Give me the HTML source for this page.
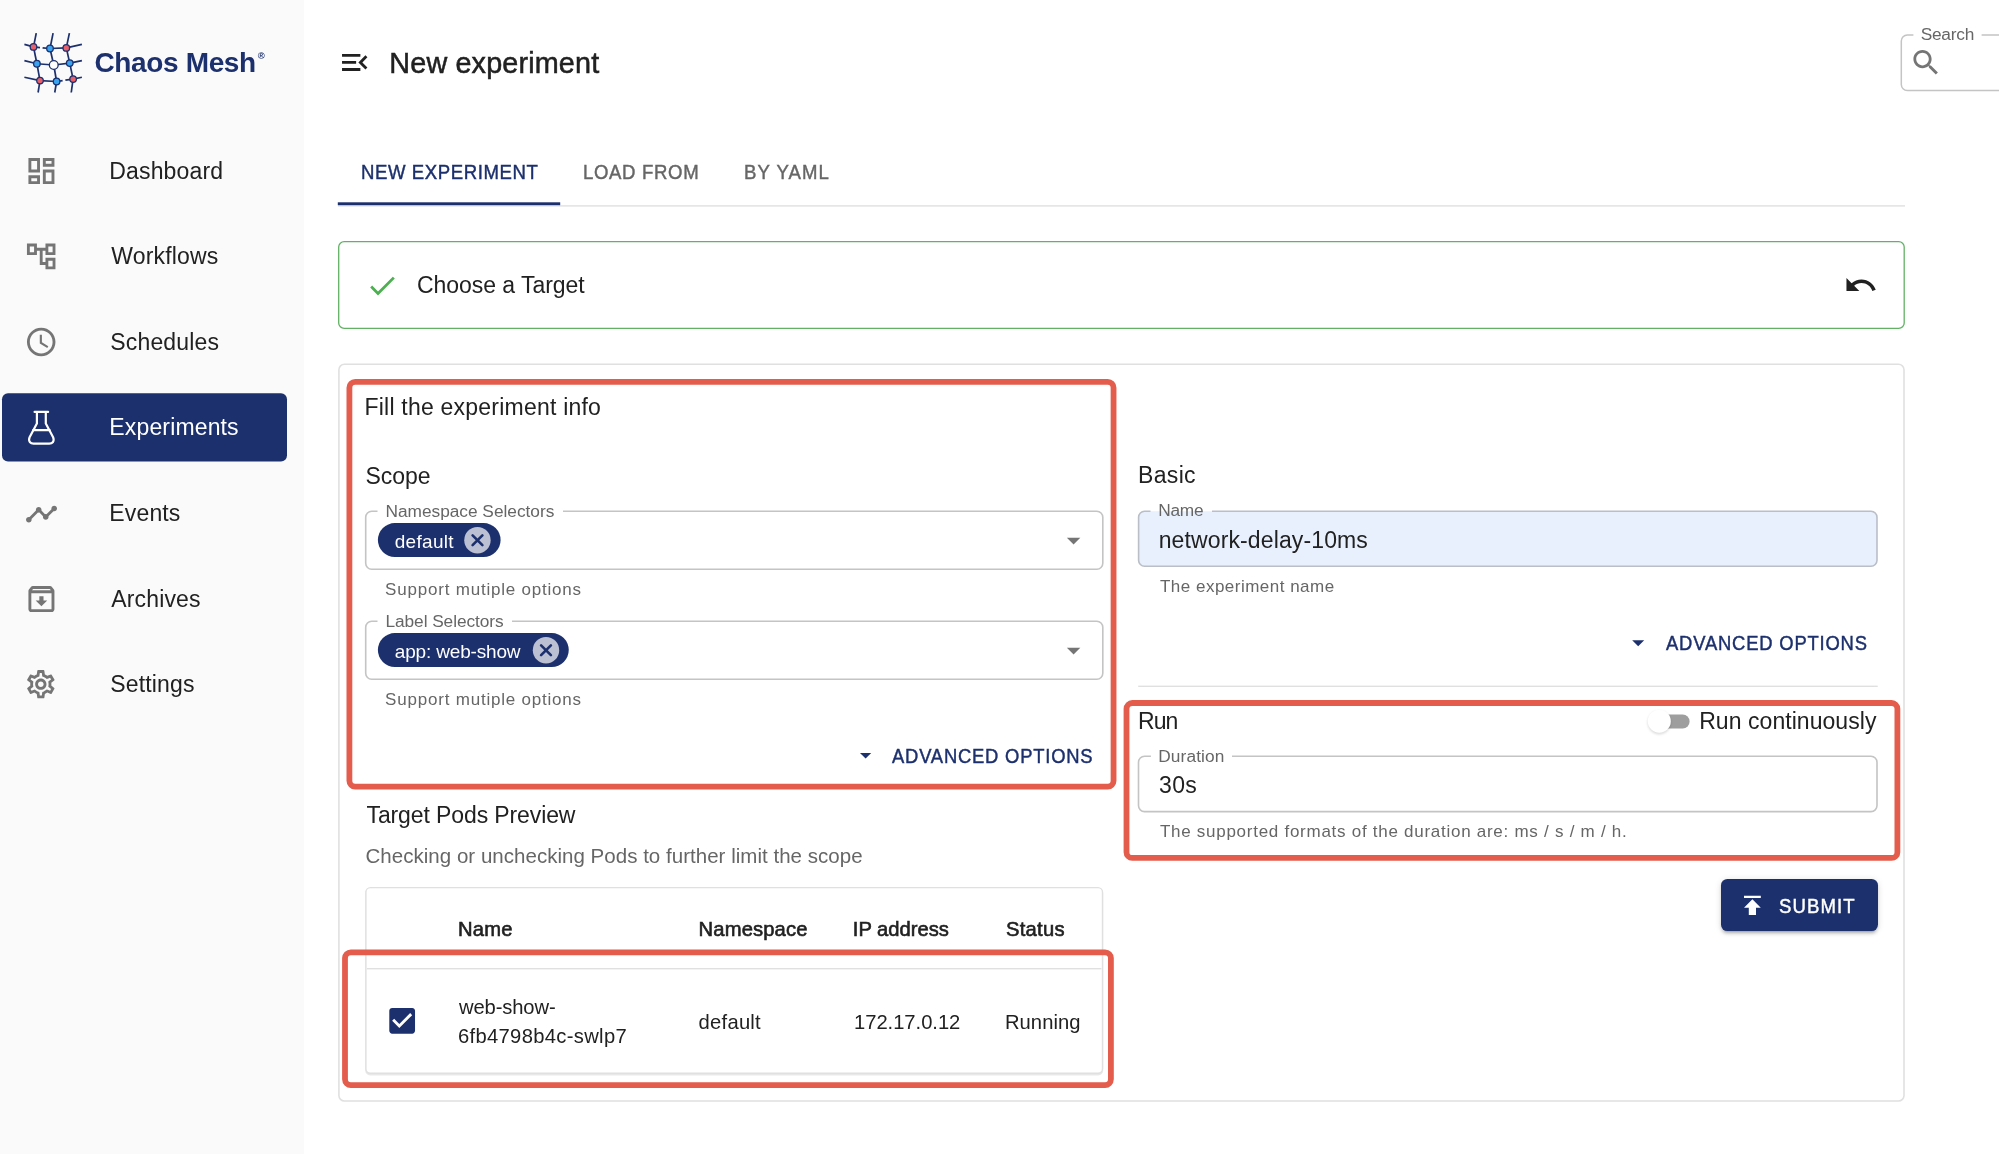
<!DOCTYPE html>
<html><head><meta charset="utf-8"><title>Chaos Mesh - New experiment</title>
<style>
html,body{margin:0;padding:0;}
body{width:1999px;height:1154px;position:relative;overflow:hidden;background:#ffffff;font-family:"Liberation Sans",sans-serif;}
.sb{position:absolute;left:0;top:0;width:304px;height:1154px;background:#fafafa;}
.btn{position:absolute;left:1721px;top:879.4px;width:156.7px;height:51.4px;border-radius:6.4px;background:#1c306d;box-shadow:0 4px 2px -3px rgba(0,0,0,0.2),0 3px 3px 0 rgba(0,0,0,0.14),0 1px 7px 0 rgba(0,0,0,0.12);}
.t{position:absolute;line-height:1;white-space:nowrap;}
.tx{position:absolute;left:0;top:0;width:1999px;height:1154px;will-change:transform;}
svg{position:absolute;left:0;top:0;}
</style></head><body>
<div class="sb"></div>
<div class="btn"></div>
<svg width="1999" height="1154" viewBox="0 0 1999 1154">
<defs><filter id='blur1' x='-50%' y='-50%' width='200%' height='200%'><feGaussianBlur stdDeviation='1.1'/></filter></defs>
<rect x='2' y='393.2' width='285' height='68.3' rx='6' fill='#1c306d'/>
<line x1='33.5' y1='46.9' x2='36.25' y2='33.1' stroke='#1c306d' stroke-width='1.7'/>
<line x1='50' y1='48.5' x2='53.1' y2='33.1' stroke='#1c306d' stroke-width='1.7'/>
<line x1='66.3' y1='47.9' x2='69.4' y2='33.1' stroke='#1c306d' stroke-width='1.7'/>
<line x1='33.5' y1='46.9' x2='24.4' y2='44.4' stroke='#1c306d' stroke-width='1.7'/>
<line x1='36.9' y1='63.75' x2='24.4' y2='60.6' stroke='#1c306d' stroke-width='1.7'/>
<line x1='40' y1='80.6' x2='24.4' y2='77.25' stroke='#1c306d' stroke-width='1.7'/>
<line x1='66.3' y1='47.9' x2='81.9' y2='44.4' stroke='#1c306d' stroke-width='1.7'/>
<line x1='69.75' y1='63.1' x2='81.9' y2='60.6' stroke='#1c306d' stroke-width='1.7'/>
<line x1='73.1' y1='79.1' x2='81.9' y2='77.25' stroke='#1c306d' stroke-width='1.7'/>
<line x1='40' y1='80.6' x2='38.1' y2='92.5' stroke='#1c306d' stroke-width='1.7'/>
<line x1='56.6' y1='81.5' x2='54.75' y2='92.5' stroke='#1c306d' stroke-width='1.7'/>
<line x1='73.1' y1='79.1' x2='71.25' y2='92.5' stroke='#1c306d' stroke-width='1.7'/>
<line x1='33.5' y1='46.9' x2='40' y2='47.6' stroke='#1c306d' stroke-width='1.7'/>
<line x1='42.6' y1='47.8' x2='50' y2='48.5' stroke='#1c306d' stroke-width='1.7'/>
<line x1='50' y1='48.5' x2='66.3' y2='47.9' stroke='#1c306d' stroke-width='1.7'/>
<line x1='36.9' y1='63.75' x2='53.75' y2='65' stroke='#1c306d' stroke-width='1.7'/>
<line x1='53.75' y1='65' x2='69.75' y2='63.1' stroke='#1c306d' stroke-width='1.7'/>
<line x1='40' y1='80.6' x2='56.6' y2='81.5' stroke='#1c306d' stroke-width='1.7'/>
<line x1='56.6' y1='81.5' x2='62.6' y2='80.6' stroke='#1c306d' stroke-width='1.7'/>
<line x1='65.4' y1='80.2' x2='73.1' y2='79.1' stroke='#1c306d' stroke-width='1.7'/>
<line x1='33.5' y1='46.9' x2='36.9' y2='63.75' stroke='#1c306d' stroke-width='1.7'/>
<line x1='36.9' y1='63.75' x2='40' y2='80.6' stroke='#1c306d' stroke-width='1.7'/>
<line x1='50' y1='48.5' x2='53.75' y2='65' stroke='#1c306d' stroke-width='1.7'/>
<line x1='53.75' y1='65' x2='56.6' y2='81.5' stroke='#1c306d' stroke-width='1.7'/>
<line x1='66.3' y1='47.9' x2='69.75' y2='63.1' stroke='#1c306d' stroke-width='1.7'/>
<line x1='69.75' y1='63.1' x2='73.1' y2='79.1' stroke='#1c306d' stroke-width='1.7'/>
<circle cx='33.5' cy='46.9' r='3.3' fill='#e8606a' stroke='#1c306d' stroke-width='1.3'/>
<circle cx='50' cy='48.5' r='3.3' fill='#3aa3f0' stroke='#1c306d' stroke-width='1.3'/>
<circle cx='66.3' cy='47.9' r='3.3' fill='#e8606a' stroke='#1c306d' stroke-width='1.3'/>
<circle cx='36.9' cy='63.75' r='3.3' fill='#3aa3f0' stroke='#1c306d' stroke-width='1.3'/>
<circle cx='53.75' cy='65' r='4.4' fill='#ffffff' stroke='#1c306d' stroke-width='1.3'/>
<circle cx='69.75' cy='63.1' r='3.3' fill='#3aa3f0' stroke='#1c306d' stroke-width='1.3'/>
<circle cx='40' cy='80.6' r='3.3' fill='#e8606a' stroke='#1c306d' stroke-width='1.3'/>
<circle cx='56.6' cy='81.5' r='3.3' fill='#3aa3f0' stroke='#1c306d' stroke-width='1.3'/>
<circle cx='73.1' cy='79.1' r='3.3' fill='#e8606a' stroke='#1c306d' stroke-width='1.3'/>
<path transform='translate(24.1 153.7) scale(1.444)' d='M19 5v2h-4V5h4M9 5v6H5V5h4m10 8v6h-4v-6h4M9 17v2H5v-2h4M21 3h-8v6h8V3zM11 3H3v10h8V3zm10 8h-8v10h8V11zm-10 4H3v6h8v-6z' fill='#757575'/>
<path transform='translate(24.1 239.3) scale(1.425)' d='M22 11V3h-7v3H9V3H2v8h7V8h2v10h4v3h7v-8h-7v3h-2V8h2v3h7zM7 9H4V5h3v4zm10 6h3v4h-3v-4zm0-10h3v4h-3V5z' fill='#757575'/>
<path transform='translate(24.1 324.9) scale(1.425)' d='M11.99 2C6.47 2 2 6.48 2 12s4.47 10 9.99 10C17.52 22 22 17.52 22 12S17.52 2 11.99 2zM12 20c-4.42 0-8-3.58-8-8s3.58-8 8-8 8 3.58 8 8-3.58 8-8 8zm.5-13H11v6l5.25 3.150.75-1.23-4.5-2.67z' fill='#757575'/>
<g fill='none' stroke='#ffffff' stroke-width='2.2' stroke-linejoin='round' stroke-linecap='round'><path d='M34.6 411.9 H48.1'/><path d='M36.9 412 V423.6 L29.6 437.2 Q28.4 440.2 30.0 442.3 Q31.2 443.6 33.5 443.6 H49.3 Q51.6 443.6 52.8 442.3 Q54.3 440.2 53.1 437.2 L45.8 423.6 V412'/><path d='M33.2 430.2 H49.6'/></g>
<path transform='translate(24.6 497.2) scale(1.41)' d='M23 8c0 1.1-.9 2-2 2-.18 0-.35-.02-.51-.07l-3.56 3.55c.05.16.07.34.07.52 0 1.1-.9 2-2 2s-2-.9-2-2c0-.18.02-.36.07-.52l-2.55-2.55c-.16.05-.34.07-.52.07s-.36-.02-.52-.07l-4.55 4.56c.05.16.07.33.07.51 0 1.1-.9 2-2 2s-2-.9-2-2 .9-2 2-2c.18 0 .35.02.51.07l4.56-4.55C8.02 9.360 8 9.18 8 9c0-1.1.9-2 2-2s2 .9 2 2c0 .18-.02.36-.07.52l2.55 2.55c.16-.05.34-.07.52-.07s.36.02.52.07l3.55-3.56C19.02 8.35 19 8.18 19 8c0-1.1.9-2 2-2s2 .9 2 2z' fill='#757575'/>
<path transform='translate(24.1 581.7) scale(1.444)' d='M20.54 5.23l-1.39-1.68C18.88 3.21 18.47 3 18 3H6c-.47 0-.88.21-1.16.55L3.46 5.23C3.17 5.57 3 6.02 3 6.5V19c0 1.1.9 2 2 2h14c1.1 0 2-.9 2-2V6.5c0-.48-.17-.93-.46-1.27zM6.24 5h11.52l.81.97H5.440l.8-.97zM5 19V8h14v11H5zm8.45-9h-2.9v3H8l4 4 4-4h-2.55z' fill='#757575'/>
<path transform='translate(23.9 667.3000000000001) scale(1.41)' d='M19.43 12.98c.04-.32.07-.64.07-.98 0-.34-.03-.66-.07-.98l2.11-1.65c.19-.15.24-.42.12-.64l-2-3.46c-.09-.16-.26-.25-.44-.25-.06 0-.12.01-.17.03l-2.49 1c-.52-.4-1.08-.73-1.69-.98l-.38-2.65C14.46 2.18 14.25 2 14 2h-4c-.25 0-.46.18-.49.42l-.38 2.65c-.61.25-1.17.59-1.690.98l-2.49-1c-.06-.02-.12-.03-.18-.03-.17 0-.34.09-.43.25l-2 3.46c-.13.22-.07.49.12.64l2.11 1.65c-.04.32-.07.65-.07.98 0 .33.03.66.07.98l-2.11 1.65c-.19.15-.24.42-.12.64l2 3.46c.09.16.26.25.44.25.06 0 .12-.01.17-.03l2.49-1c.52.4 1.08.73 1.69.98l.38 2.65c.03.24.24.42.49.42h4c.25 0 .46-.18.49-.42l.38-2.65c.61-.25 1.17-.59 1.69-.98l2.49 1c.06.02.12.03.18.03.17 0 .34-.09.43-.25l2-3.46c.12-.22.07-.49-.12-.64l-2.11-1.65zm-1.98-1.71c.04.31.05.52.05.73 0 .21-.02.43-.05.73l-.14 1.13.89.7 1.08.84-.7 1.21-1.27-.51-1.04-.42-.9.68c-.43.32-.84.56-1.25.73l-1.06.43-.16 1.13-.2 1.35h-1.4l-.19-1.35-.16-1.13-1.06-.43c-.43-.18-.83-.41-1.23-.71l-.91-.7-1.06.43-1.27.51-.7-1.21 1.08-.84.89-.7-.14-1.13c-.03-.31-.05-.54-.05-.74s.02-.43.05-.73l.14-1.13-.89-.7-1.08-.84.7-1.21 1.27.51 1.04.42.9-.68c.43-.32.84-.56 1.25-.73l1.06-.43.16-1.13.2-1.35h1.39l.19 1.35.16 1.13 1.06.43c.43.18.83.41 1.23.71l.91.7 1.06-.43 1.27-.51.7 1.21-1.07.85-.89.7.14 1.13zM12 8c-2.21 0-4 1.79-4 4s1.79 4 4 4 4-1.79 4-4-1.79-4-4-4zm0 6c-1.1 0-2-.9-2-2s.9-2 2-2 2 .9 2 2-.9 2-2 2z' fill='#757575'/>
<path transform='translate(337.8 45.5) scale(1.41)' d='M3 18h13v-2H3v2zm0-5h10v-2H3v2zm0-7v2h13V6H3zm18 9.59L17.42 12 21 8.41 19.59 7l-5 5 5 5L21 15.59z' fill='#212121'/>
<path d='M1981.6 35.0 H2024 A6 6 0 0 1 2030 41.0 V84.5 A6 6 0 0 1 2024 90.5 H1907.3 A6 6 0 0 1 1901.3 84.5 V41.0 A6 6 0 0 1 1907.3 35.0 H1913.4' fill='none' stroke='#c4c4c4' stroke-width='1.5'/>
<path transform='translate(1909.2 45.8) scale(1.4)' d='M15.5 14h-.79l-.28-.27C15.41 12.59 16 11.11 16 9.5 16 5.91 13.09 3 9.5 3S3 5.91 3 9.5 5.91 16 9.5 16c1.61 0 3.09-.59 4.23-1.57l.27.28v.79l5 4.99L20.49 19l-4.99-5zm-6 0C7.01 14 5 11.990 5 9.5S7.01 5 9.5 5 14 7.01 14 9.5 11.99 14 9.5 14z' fill='#757575'/>
<rect x='338' y='205.2' width='1567' height='1.4' fill='#e0e0e0'/>
<rect x='337.8' y='202.3' width='222.4' height='2.9' fill='#1c306d'/>
<rect x='338.7' y='241.6' width='1565.5' height='86.8' rx='5.5' fill='none' stroke='#62b165' stroke-width='1.3'/>
<path transform='translate(365.4 268.8) scale(1.4)' d='M9 16.17L4.83 12l-1.42 1.41L9 19 21 7l-1.41-1.41z' fill='#4caf50'/>
<path transform='translate(1843.6 268.0) scale(1.43)' d='M12.5 8c-2.65 0-5.05.99-6.9 2.6L2 7v9h9l-3.62-3.62c1.39-1.16 3.16-1.88 5.12-1.88 3.54 0 6.55 2.31 7.6 5.5l2.37-.78C21.08 11.03 17.15 8 12.5 8z' fill='#212121'/>
<rect x='338.9' y='364.3' width='1565.1' height='736.7' rx='5.5' fill='none' stroke='#e0e0e0' stroke-width='1.6'/>
<path d='M563 511.3 H1096.8 A6 6 0 0 1 1102.8 517.3 V563.2 A6 6 0 0 1 1096.8 569.2 H371.7 A6 6 0 0 1 365.7 563.2 V517.3 A6 6 0 0 1 371.7 511.3 H377.5' fill='none' stroke='#c4c4c4' stroke-width='1.6'/>
<path d='M512 621.3 H1096.8 A6 6 0 0 1 1102.8 627.3 V673.2 A6 6 0 0 1 1096.8 679.2 H371.7 A6 6 0 0 1 365.7 673.2 V627.3 A6 6 0 0 1 371.7 621.3 H377.5' fill='none' stroke='#c4c4c4' stroke-width='1.6'/>
<rect x='1138.6' y='511.2' width='738.4000000000001' height='55.00000000000006' rx='6' fill='#e8f0fe'/><path d='M1212 511.2 H1871 A6 6 0 0 1 1877 517.2 V560.2 A6 6 0 0 1 1871 566.2 H1144.6 A6 6 0 0 1 1138.6 560.2 V517.2 A6 6 0 0 1 1144.6 511.2 H1150.5' fill='none' stroke='#b9bec7' stroke-width='1.6'/>
<path d='M1232 756.3 H1871 A6 6 0 0 1 1877 762.3 V805.6 A6 6 0 0 1 1871 811.6 H1144.5 A6 6 0 0 1 1138.5 805.6 V762.3 A6 6 0 0 1 1144.5 756.3 H1150.9' fill='none' stroke='#c4c4c4' stroke-width='1.6'/>
<path d='M1066.9 537.8 L1080.3 537.8 L1073.6 544.5 Z' fill='#757575'/>
<path d='M1066.9 647.8 L1080.3 647.8 L1073.6 654.5 Z' fill='#757575'/>
<rect x='377.9' y='523.1' width='122.7' height='34' rx='17' fill='#1c306d'/>
<rect x='377.9' y='633.1' width='190.85' height='34' rx='17' fill='#1c306d'/>
<circle cx='477.45' cy='540.2' r='13.2' fill='#bbc0d3'/>
<path transform='translate(477.5 540.3)' d='M-4.9 -4.9 L4.9 4.9 M4.9 -4.9 L-4.9 4.9' stroke='#1c306d' stroke-width='2.6' stroke-linecap='round'/>
<circle cx='546' cy='650.2' r='13.2' fill='#bbc0d3'/>
<path transform='translate(546 650.3)' d='M-4.9 -4.9 L4.9 4.9 M4.9 -4.9 L-4.9 4.9' stroke='#1c306d' stroke-width='2.6' stroke-linecap='round'/>
<path d='M860 753 L871.2 753 L865.6 758.6 Z' fill='#1c306d'/>
<path d='M1632.2 640.2 L1644.2 640.2 L1638.2 646.2 Z' fill='#1c306d'/>
<rect x='365.2' y='888.4' width='738' height='187' rx='5' fill='#000' fill-opacity='0.09'/>
<rect x='365.9' y='887.6' width='736.6' height='185.7' rx='4.5' fill='#ffffff' stroke='#e0e0e0' stroke-width='1.4'/>
<rect x='366.9' y='968' width='734.5' height='1.4' fill='#e0e0e0'/>
<path transform='translate(385 1003.7) scale(1.43)' d='M19 3H5c-1.11 0-2 .9-2 2v14c0 1.1.89 2 2 2h14c1.11 0 2-.9 2-2V5c0-1.1-.89-2-2-2zm-9 14l-5-5 1.41-1.41L10 14.17l7.59-7.59L19 8l-9 9z' fill='#1c306d'/>
<rect x='1138.2' y='685.6' width='739.5' height='1.4' fill='#e0e0e0'/>
<rect x='1653' y='714.6' width='36.6' height='13.8' rx='6.9' fill='#9e9e9e'/>
<circle cx='1659.3' cy='722.6' r='11.8' fill='#000' fill-opacity='0.13' filter='url(#blur1)'/>
<circle cx='1659.3' cy='721.2' r='11.5' fill='#ffffff'/>
<path transform='translate(1738 890.9) scale(1.2)' d='M5 4v2h14V4H5zm0 10h4v6h6v-6h4l-7-7-7 7z' fill='#ffffff'/>
<rect x='349.4' y='381.9' width='764.15' height='404.7' rx='5.8' fill='none' stroke='#e45c4c' stroke-width='5.8'/>
<rect x='345.0' y='952.3' width='765.9' height='132.8' rx='5.8' fill='none' stroke='#e45c4c' stroke-width='5.8'/>
<rect x='1126.5' y='703' width='770.9' height='154.95' rx='5.8' fill='none' stroke='#e45c4c' stroke-width='5.8'/>
</svg>
<div class="tx">
<div class='t' style='left:94.5px;top:48.55px;font-size:28px;font-weight:700;letter-spacing:-0.361px;color:#1c306d;'>Chaos Mesh</div>
<div class='t' style='left:389.3px;top:49.1px;font-size:28.8px;font-weight:400;letter-spacing:0.138px;color:#212121;-webkit-text-stroke:0.5px #212121;'>New experiment</div>
<div class='t' style='left:109.3px;top:159.5px;font-size:23px;font-weight:400;letter-spacing:0.15px;color:#212121;'>Dashboard</div>
<div class='t' style='left:111.3px;top:245.1px;font-size:23px;font-weight:400;letter-spacing:0.15px;color:#212121;'>Workflows</div>
<div class='t' style='left:110.3px;top:330.7px;font-size:23px;font-weight:400;letter-spacing:0.15px;color:#212121;'>Schedules</div>
<div class='t' style='left:109.3px;top:416.3px;font-size:23px;font-weight:400;letter-spacing:0.15px;color:#ffffff;'>Experiments</div>
<div class='t' style='left:109.3px;top:501.9px;font-size:23px;font-weight:400;letter-spacing:0.15px;color:#212121;'>Events</div>
<div class='t' style='left:111.3px;top:587.5px;font-size:23px;font-weight:400;letter-spacing:0.15px;color:#212121;'>Archives</div>
<div class='t' style='left:110.3px;top:673.1px;font-size:23px;font-weight:400;letter-spacing:0.15px;color:#212121;'>Settings</div>
<div class='t' style='left:360.7px;top:161.9px;font-size:20.2px;font-weight:400;letter-spacing:0.635px;color:#1c306d;-webkit-text-stroke:0.45px #1c306d;transform:scaleX(0.92);transform-origin:0 0;'>NEW EXPERIMENT</div>
<div class='t' style='left:583.1px;top:161.9px;font-size:20.2px;font-weight:400;letter-spacing:0.707px;color:#666666;-webkit-text-stroke:0.45px #666666;transform:scaleX(0.92);transform-origin:0 0;'>LOAD FROM</div>
<div class='t' style='left:743.5px;top:161.9px;font-size:20.2px;font-weight:400;letter-spacing:1.159px;color:#666666;-webkit-text-stroke:0.45px #666666;transform:scaleX(0.92);transform-origin:0 0;'>BY YAML</div>
<div class='t' style='left:417.0px;top:273.7px;font-size:23px;font-weight:400;letter-spacing:-0.043px;color:#212121;'>Choose a Target</div>
<div class='t' style='left:1920.7px;top:26.2px;font-size:17.3px;font-weight:400;letter-spacing:-0.24px;color:#666666;'>Search</div>
<div class='t' style='left:364.5px;top:396.3px;font-size:23px;font-weight:400;letter-spacing:0.217px;color:#212121;'>Fill the experiment info</div>
<div class='t' style='left:365.5px;top:464.6px;font-size:23px;font-weight:400;letter-spacing:-0.05px;color:#212121;'>Scope</div>
<div class='t' style='left:385.5px;top:502.55px;font-size:17.3px;font-weight:400;letter-spacing:-0.014px;color:#666666;'>Namespace Selectors</div>
<div class='t' style='left:394.75px;top:532.05px;font-size:19px;font-weight:400;letter-spacing:0.308px;color:#ffffff;'>default</div>
<div class='t' style='left:385.1px;top:580.7px;font-size:17px;font-weight:400;letter-spacing:0.791px;color:#666666;'>Support mutiple options</div>
<div class='t' style='left:385.5px;top:612.55px;font-size:17.3px;font-weight:400;letter-spacing:-0.071px;color:#666666;'>Label Selectors</div>
<div class='t' style='left:394.75px;top:642.05px;font-size:19px;font-weight:400;letter-spacing:-0.167px;color:#ffffff;'>app: web-show</div>
<div class='t' style='left:385.1px;top:690.7px;font-size:17px;font-weight:400;letter-spacing:0.791px;color:#666666;'>Support mutiple options</div>
<div class='t' style='left:892.4px;top:745.9px;font-size:20px;font-weight:400;letter-spacing:0.855px;color:#1c306d;-webkit-text-stroke:0.45px #1c306d;transform:scaleX(0.92);transform-origin:0 0;'>ADVANCED OPTIONS</div>
<div class='t' style='left:366.5px;top:804.05px;font-size:23px;font-weight:400;letter-spacing:-0.111px;color:#212121;'>Target Pods Preview</div>
<div class='t' style='left:365.5px;top:846.2px;font-size:20.5px;font-weight:400;letter-spacing:0.026px;color:#666666;'>Checking or unchecking Pods to further limit the scope</div>
<div class='t' style='left:458.0px;top:918.5px;font-size:20.2px;font-weight:400;letter-spacing:0.25px;color:#212121;-webkit-text-stroke:0.6px #212121;'>Name</div>
<div class='t' style='left:698.6px;top:918.5px;font-size:20.2px;font-weight:400;letter-spacing:0.138px;color:#212121;-webkit-text-stroke:0.6px #212121;'>Namespace</div>
<div class='t' style='left:852.8px;top:918.5px;font-size:20.2px;font-weight:400;letter-spacing:0.0px;color:#212121;-webkit-text-stroke:0.6px #212121;'>IP address</div>
<div class='t' style='left:1005.9px;top:918.5px;font-size:20.2px;font-weight:400;letter-spacing:0.28px;color:#212121;-webkit-text-stroke:0.6px #212121;'>Status</div>
<div class='t' style='left:459.0px;top:997.0px;font-size:20.2px;font-weight:400;letter-spacing:-0.125px;color:#212121;'>web-show-</div>
<div class='t' style='left:458.0px;top:1025.5px;font-size:20.2px;font-weight:400;letter-spacing:0.32px;color:#212121;'>6fb4798b4c-swlp7</div>
<div class='t' style='left:698.6px;top:1011.6px;font-size:20.2px;font-weight:400;letter-spacing:0.25px;color:#212121;'>default</div>
<div class='t' style='left:854.0px;top:1011.6px;font-size:20.2px;font-weight:400;letter-spacing:-0.03px;color:#212121;'>172.17.0.12</div>
<div class='t' style='left:1004.9px;top:1011.6px;font-size:20.2px;font-weight:400;letter-spacing:0.083px;color:#212121;'>Running</div>
<div class='t' style='left:1138.1px;top:464.3px;font-size:23px;font-weight:400;letter-spacing:0.3px;color:#212121;'>Basic</div>
<div class='t' style='left:1158.3px;top:502.3px;font-size:17.3px;font-weight:400;letter-spacing:-0.267px;color:#666666;'>Name</div>
<div class='t' style='left:1158.7px;top:528.9px;font-size:23px;font-weight:400;letter-spacing:0.124px;color:#212121;'>network-delay-10ms</div>
<div class='t' style='left:1160.0px;top:577.7px;font-size:17px;font-weight:400;letter-spacing:0.489px;color:#666666;'>The experiment name</div>
<div class='t' style='left:1665.5px;top:633.2px;font-size:20px;font-weight:400;letter-spacing:0.884px;color:#1c306d;-webkit-text-stroke:0.45px #1c306d;transform:scaleX(0.92);transform-origin:0 0;'>ADVANCED OPTIONS</div>
<div class='t' style='left:1138.1px;top:709.5px;font-size:23px;font-weight:400;letter-spacing:-1.0px;color:#212121;'>Run</div>
<div class='t' style='left:1699.2px;top:709.5px;font-size:23px;font-weight:400;letter-spacing:0.053px;color:#212121;'>Run continuously</div>
<div class='t' style='left:1158.2px;top:747.7px;font-size:17.3px;font-weight:400;letter-spacing:0.129px;color:#666666;'>Duration</div>
<div class='t' style='left:1158.9px;top:773.8px;font-size:23px;font-weight:400;letter-spacing:0.45px;color:#212121;'>30s</div>
<div class='t' style='left:1159.9px;top:823.1px;font-size:17px;font-weight:400;letter-spacing:0.73px;color:#666666;'>The supported formats of the duration are: ms / s / m / h.</div>
<div class='t' style='left:1778.6px;top:896.3px;font-size:20.2px;font-weight:400;letter-spacing:1.174px;color:#ffffff;-webkit-text-stroke:0.45px #ffffff;transform:scaleX(0.92);transform-origin:0 0;'>SUBMIT</div>
<div class='t' style='left:257.8px;top:51.3px;font-size:9.5px;font-weight:700;color:#1c306d'>&#174;</div>
</div>
</body></html>
